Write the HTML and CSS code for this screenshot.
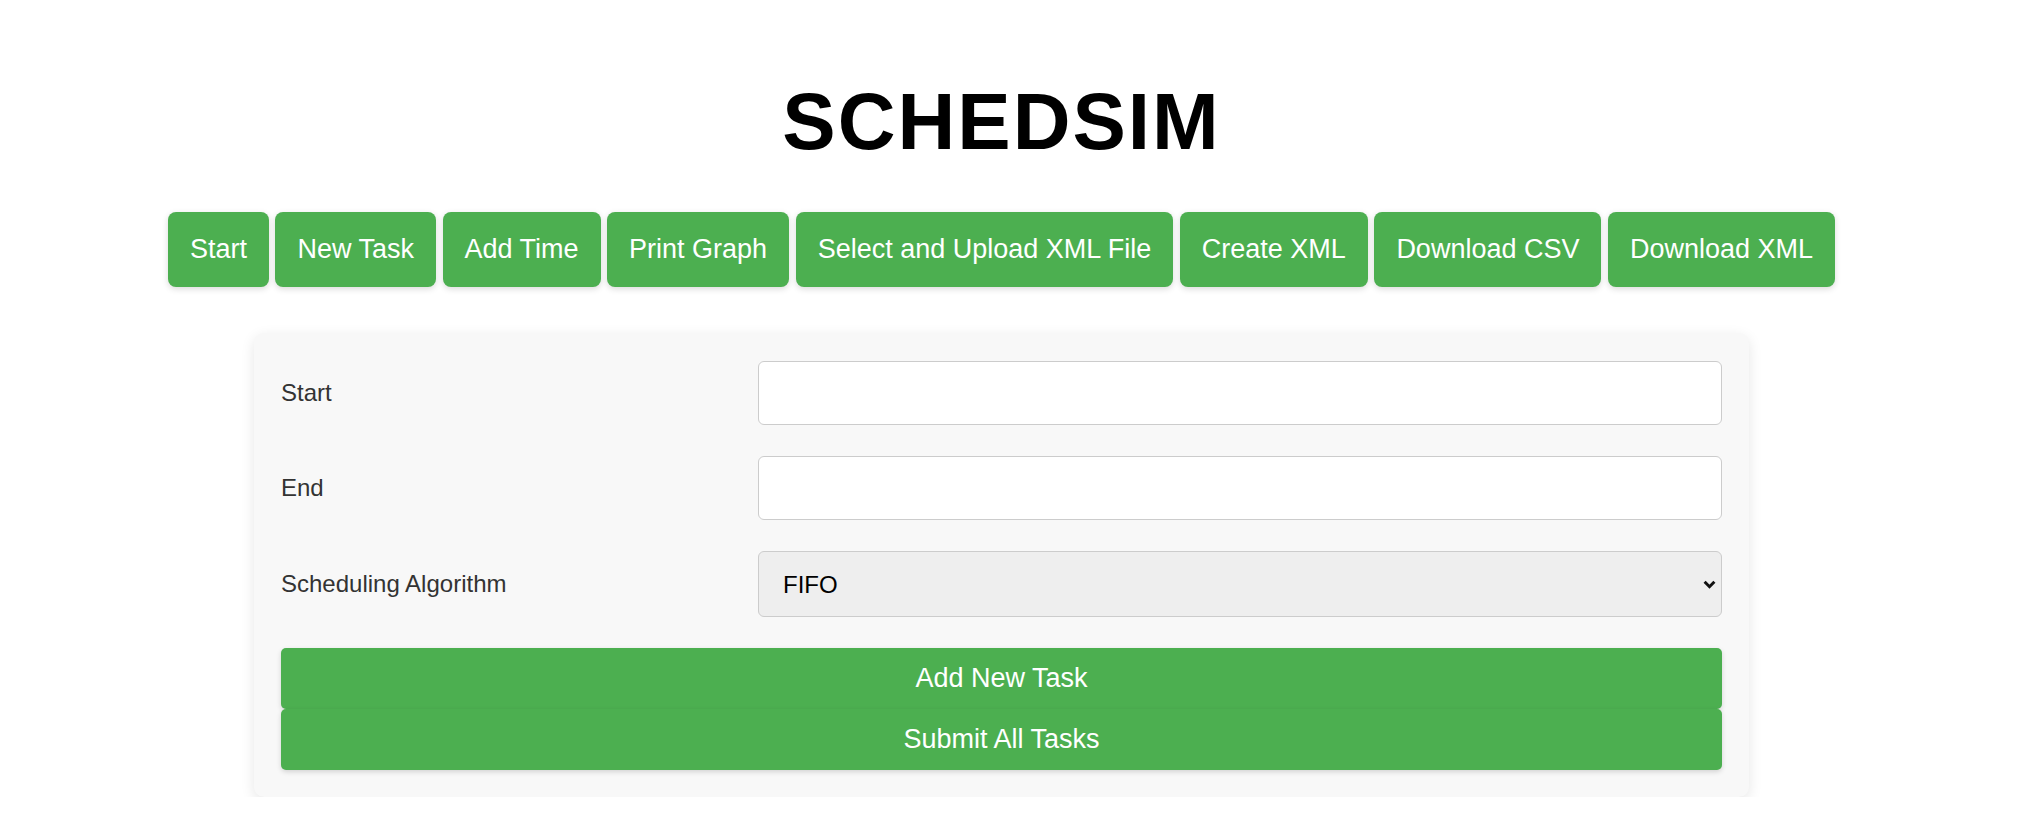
FILE: index.html
```html
<!DOCTYPE html>
<html lang="en">
<head>
<meta charset="utf-8">
<title>SCHEDSIM</title>
<link rel="stylesheet" href="styles.css">
</head>
<body>
<div class="page">
  <h1 class="title">SCHEDSIM</h1>
  <div class="toolbar">
    <button class="tbtn" type="button">Start</button>
    <button class="tbtn" type="button">New Task</button>
    <button class="tbtn" type="button">Add Time</button>
    <button class="tbtn" type="button">Print Graph</button>
    <button class="tbtn" type="button">Select and Upload XML File</button>
    <button class="tbtn" type="button">Create XML</button>
    <button class="tbtn" type="button">Download CSV</button>
    <button class="tbtn" type="button">Download XML</button>
  </div>
  <form class="panel">
    <div class="row">
      <label class="label" for="start">Start</label>
      <input class="field" id="start" type="text">
    </div>
    <div class="row">
      <label class="label" for="end">End</label>
      <input class="field" id="end" type="text">
    </div>
    <div class="row">
      <label class="label" for="algo">Scheduling Algorithm</label>
      <div class="select-wrap">
        <select class="field select" id="algo">
          <option>FIFO</option>
          <option>SJF</option>
          <option>Round Robin</option>
        </select>
        <svg class="chev" width="13" height="9" viewBox="0 0 13 9" aria-hidden="true">
          <path d="M1.6 1.8 L6.5 6.7 L11.4 1.8" fill="none" stroke="#111" stroke-width="3" stroke-linecap="butt" stroke-linejoin="miter"/>
        </svg>
      </div>
    </div>
    <div class="actions">
      <button class="wide" type="button">Add New Task</button>
      <button class="wide" type="button">Submit All Tasks</button>
    </div>
  </form>
</div>
</body>
</html>
```
FILE: styles.css
```css
html, body {
  margin: 0;
  background: #ffffff;
}

body {
  font-family: "Liberation Sans", Arial, sans-serif;
}

.page {
  padding-right: 24px;
}

.title {
  margin: 76px 0 44px;
  text-align: center;
  font-size: 80px;
  font-weight: bold;
  letter-spacing: 2px;
  color: #000;
}

.toolbar {
  display: flex;
  justify-content: center;
  gap: 6.5px;
}

.tbtn {
  font-family: inherit;
  font-size: 27px;
  line-height: normal;
  padding: 22px;
  background: #4caf50;
  color: #ffffff;
  border: none;
  border-radius: 8px;
  box-shadow: 0 2px 6px rgba(0, 0, 0, 0.15);
  cursor: pointer;
}

.panel {
  box-sizing: border-box;
  width: 1495px;
  margin: 46px auto 0;
  padding: 28px 27px 27px;
  background: #f8f8f8;
  border-radius: 10px;
  box-shadow: 0 4px 14px rgba(0, 0, 0, 0.1);
  display: flex;
  flex-direction: column;
  gap: 31px;
}

.row {
  display: grid;
  grid-template-columns: 477px 1fr;
  align-items: center;
}

.label {
  font-size: 24px;
  color: #333333;
}

.field {
  box-sizing: border-box;
  width: 100%;
  height: 64px;
  font-family: inherit;
  font-size: 24px;
  padding: 0 20px;
  border: 1px solid #cccccc;
  border-radius: 6px;
  background: #ffffff;
  color: #000;
}

.select-wrap {
  position: relative;
}

.select {
  display: block;
  height: 66px;
  padding-left: 24px;
  background-color: #eeeeee;
  appearance: none;
  -webkit-appearance: none;
}

.chev {
  position: absolute;
  right: 6px;
  top: 29px;
  pointer-events: none;
}

.actions {
  display: flex;
  flex-direction: column;
}

.wide {
  font-family: inherit;
  font-size: 27px;
  line-height: normal;
  padding: 15px;
  width: 100%;
  background: #4caf50;
  color: #ffffff;
  border: none;
  border-radius: 5px;
  box-shadow: 0 2px 5px rgba(0, 0, 0, 0.15);
  cursor: pointer;
}
```
